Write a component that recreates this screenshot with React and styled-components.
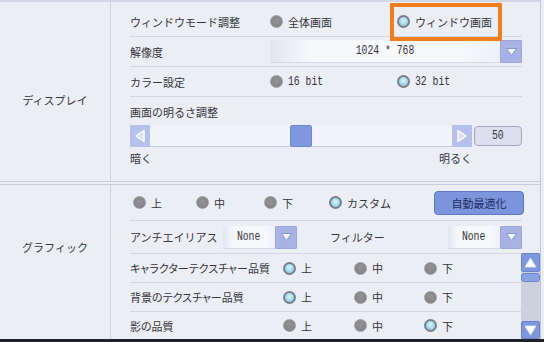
import React from "react";
import styled, { createGlobalStyle, css } from "styled-components";

const GlobalStyle = createGlobalStyle`
  html,
  body {
    margin: 0;
    padding: 0;
    background: #eceef6;
  }

  body {
    font-family: "Noto Sans CJK JP", "Noto Sans", sans-serif;
    font-size: 11px;
    color: #34353d;
  }
`;

const Screen = styled.div`
  width: 544px;
  height: 342px;
  overflow: hidden;
  display: flex;
  flex-direction: column;
  background: #eceef6;
`;

const Panel = styled.div`
  width: 540px;
  flex: 1;
  min-height: 0;
  display: flex;
  flex-direction: column;
  border-top: 2px solid #d3d6e3;
  border-right: 1px solid #c3c6d6;
`;

const BottomEdge = styled.div`
  height: 3px;
  background: #202124;
`;

const Section = styled.section`
  display: grid;
  grid-template-columns: 111px 1fr;
  border-bottom: 1px solid #c8cbda;

  ${(p) =>
    p.$continued &&
    css`
      flex: 1;
      min-height: 0;
      margin-top: 2px;
      border-top: 1px solid #c8cbda;
      border-bottom: 0;
    `}
`;

const SectionLabel = styled.div`
  border-right: 1px solid #d0d3e0;
  text-align: center;
  line-height: 16px;
  padding-top: ${(p) => p.$top}px;
`;

const Body = styled.div`
  min-width: 0;
  display: flex;
  flex-direction: column;
  padding: ${(p) => p.$top || 0}px 18px 0 19px;
`;

const Row = styled.div`
  height: ${(p) => p.$h || 29}px;
  display: flex;
  align-items: center;
  border-bottom: ${(p) => (p.$last ? "0" : "1px solid #d3d6e3")};
`;

const RowLabel = styled.span`
  width: ${(p) => (p.$w ? `${p.$w}px` : "auto")};
  flex: ${(p) => (p.$w ? "0 0 auto" : "1")};
  white-space: nowrap;
  line-height: 16px;
  font-feature-settings: ${(p) => (p.$narrow ? '"palt"' : "normal")};
`;

const Option = styled.span`
  position: relative;
  display: flex;
  align-items: center;
  gap: 5px;
  flex: 0 0 auto;
  width: ${(p) => (p.$w ? `${p.$w}px` : "auto")};
  margin-left: ${(p) => p.$ml || 0}px;
  line-height: 16px;
  white-space: nowrap;
`;

const Radio = styled.span`
  width: 13px;
  height: 13px;
  flex: 0 0 auto;
  box-sizing: border-box;
  border-radius: 50%;
  ${(p) =>
    p.$on
      ? css`
          border: 2px solid #7a8089;
          background: radial-gradient(
            circle at 50% 40%,
            #d6f3fb 0,
            #a4d8ea 55%,
            #86b8cc 100%
          );
        `
      : css`
          border: 1px solid #9c9c9f;
          background: radial-gradient(circle at 50% 40%, #949496, #7f7f82);
        `}
`;

const Mono = styled.span`
  display: inline-block;
  font-family: "Liberation Mono", "DejaVu Sans Mono", monospace;
  font-size: 13px;
  line-height: 16px;
  transform: scaleX(0.75);
  transform-origin: ${(p) => (p.$left ? "left center" : "center")};
  margin-right: ${(p) => (p.$left ? "-25%" : "0")};
  color: #33343c;
`;

const Highlight = styled.span`
  position: absolute;
  inset: -11px -10px -11px -7px;
  border: 4px solid #f17d1d;
  pointer-events: none;
`;

const Select = styled.div`
  display: flex;
  height: 23px;
  width: ${(p) => (p.$w ? `${p.$w}px` : "auto")};
  flex: ${(p) => (p.$w ? "0 0 auto" : "1")};
`;

const SelectValue = styled.div`
  flex: 1;
  display: flex;
  align-items: center;
  justify-content: center;
  box-sizing: border-box;
  border-bottom: 1px solid #d6d9e6;
  background: linear-gradient(
    to right,
    #e3e5ef,
    #f7f8fc 18%,
    #f7f8fc 82%,
    #eef0f7
  );
`;

const ArrowBox = styled.div`
  width: 22px;
  box-sizing: border-box;
  display: flex;
  align-items: center;
  justify-content: center;
  background: #a8b3e3;
  border: 1px solid #9ba7dc;
  border-radius: 1px;
`;

const BrightBlock = styled.div`
  padding-top: 7px;
  height: 77px;
`;

const SliderRow = styled.div`
  display: flex;
  align-items: center;
  height: 22px;
  margin-top: 5px;
`;

const StepButton = styled.div`
  width: 20px;
  height: 22px;
  flex: 0 0 auto;
  display: flex;
  align-items: center;
  justify-content: center;
  background: #b5c0ec;
`;

const Track = styled.div`
  position: relative;
  flex: 1;
  height: 22px;
  box-sizing: border-box;
  background: #f2f3fa;
  border-bottom: 1px solid #c7cadd;
`;

const Thumb = styled.div`
  position: absolute;
  top: 0;
  width: 22px;
  height: 22px;
  box-sizing: border-box;
  background: #7f97de;
  border: 1px solid #6f87d0;
  border-radius: 2px;
`;

const ValueBox = styled.div`
  width: 48px;
  height: 20px;
  margin-left: 2px;
  box-sizing: border-box;
  display: flex;
  align-items: center;
  justify-content: center;
  background: #dcdfee;
  border: 1px solid #a2a6bb;
  border-radius: 4px;
`;

const SliderLabels = styled.div`
  display: flex;
  justify-content: space-between;
  margin: 3px 50px 0 0;
  line-height: 16px;
`;

const ActionButton = styled.button`
  margin: 0 -2px 0 auto;
  width: 90px;
  height: 24px;
  padding: 0;
  font: inherit;
  color: #1e2a63;
  background: #7c94dc;
  border: 1px solid #5f76c4;
  border-radius: 4px;
`;

const Gap = styled.span`
  width: 33px;
  flex: 0 0 auto;
`;

const List = styled.div`
  flex: 1;
  min-height: 0;
  display: grid;
  grid-template-columns: 1fr 19px;
  margin-right: -18px;
`;

const ListRows = styled.div`
  display: flex;
  flex-direction: column;
`;

const ListRow = styled.div`
  height: ${(p) => p.$h || 28}px;
  display: flex;
  align-items: center;
  border-top: 1px solid #d3d6e3;
`;

const ScrollBar = styled.div`
  display: flex;
  flex-direction: column;
  background: #cdd0dd;
`;

const ScrollButton = styled.div`
  height: ${(p) => p.$h}px;
  box-sizing: border-box;
  display: flex;
  align-items: center;
  justify-content: center;
  background: #7f97de;
  border: 1px solid #6a82cc;
  border-radius: 2px;
`;

const ScrollThumb = styled.div`
  height: 9px;
  margin-top: 1px;
  box-sizing: border-box;
  background: #8aa1e2;
  border: 1px solid #6c84cf;
  border-radius: 3px;
`;

const ScrollSpace = styled.div`
  flex: 1;
`;

const DownArrow = () => (
  <svg width="13" height="10" viewBox="0 0 13 10">
    <path
      d="M1.5 1.5 H11.5 L6.5 8.5 Z"
      fill="#f4f6fd"
      stroke="#8794d2"
      strokeWidth="1"
      strokeLinejoin="round"
    />
  </svg>
);

const StepArrow = ({ dir }) => (
  <svg width="12" height="14" viewBox="0 0 12 14">
    <path
      d={dir === "left" ? "M10 1.5 V12.5 L2 7 Z" : "M2 1.5 V12.5 L10 7 Z"}
      fill="#d7def7"
      stroke="#ffffff"
      strokeWidth="1.4"
      strokeLinejoin="round"
    />
  </svg>
);

const ScrollArrow = ({ up }) => (
  <svg width="13" height="11" viewBox="0 0 13 11">
    <path
      d={up ? "M6.5 1 L12 10 H1 Z" : "M1 1 H12 L6.5 10 Z"}
      fill="#ffffff"
      stroke="#dfe6fb"
      strokeWidth="0.8"
      strokeLinejoin="round"
    />
  </svg>
);

const Dropdown = ({ value, width }) => (
  <Select $w={width}>
    <SelectValue>
      <Mono>{value}</Mono>
    </SelectValue>
    <ArrowBox>
      <DownArrow />
    </ArrowBox>
  </Select>
);

const RadioOption = ({ on, children, mono, width, ml, highlight }) => (
  <Option $w={width} $ml={ml}>
    <Radio $on={on} />
    {mono ? <Mono $left>{children}</Mono> : children}
    {highlight && <Highlight />}
  </Option>
);

const qualityRows = [
  { label: "キャラクターテクスチャー品質", value: 0 },
  { label: "背景のテクスチャー品質", value: 0 },
  { label: "影の品質", value: 2 },
];

const levels = ["上", "中", "下"];
const levelWidths = [71, 70];

const brightness = 50;

export default function App() {
  return (
    <Screen>
      <GlobalStyle />
      <Panel>
        <Section>
          <SectionLabel $top={90}>ディスプレイ</SectionLabel>
          <Body $top={5}>
            <Row>
              <RowLabel $w={140}>ウィンドウモード調整</RowLabel>
              <RadioOption width={127}>全体画面</RadioOption>
              <RadioOption on width={95} highlight>
                ウィンドウ画面
              </RadioOption>
            </Row>
            <Row>
              <RowLabel $w={140}>解像度</RowLabel>
              <Dropdown value="1024 * 768" />
            </Row>
            <Row>
              <RowLabel $w={140}>カラー設定</RowLabel>
              <RadioOption mono width={127}>
                16 bit
              </RadioOption>
              <RadioOption on mono>
                32 bit
              </RadioOption>
            </Row>
            <BrightBlock>
              <RowLabel>画面の明るさ調整</RowLabel>
              <SliderRow>
                <StepButton>
                  <StepArrow dir="left" />
                </StepButton>
                <Track>
                  <Thumb style={{ left: `calc((100% - 22px) * ${brightness / 100})` }} />
                </Track>
                <StepButton>
                  <StepArrow dir="right" />
                </StepButton>
                <ValueBox>
                  <Mono>{brightness}</Mono>
                </ValueBox>
              </SliderRow>
              <SliderLabels>
                <span>暗く</span>
                <span>明るく</span>
              </SliderLabels>
            </BrightBlock>
          </Body>
        </Section>

        <Section $continued>
          <SectionLabel $top={54}>グラフィック</SectionLabel>
          <Body>
            <Row $h={35}>
              <RadioOption ml={3} width={63}>
                上
              </RadioOption>
              <RadioOption width={68}>中</RadioOption>
              <RadioOption width={65}>下</RadioOption>
              <RadioOption on>カスタム</RadioOption>
              <ActionButton>自動最適化</ActionButton>
            </Row>
            <Row $h={32} $last>
              <RowLabel $w={93}>アンチエイリアス</RowLabel>
              <Dropdown value="None" width={74} />
              <Gap />
              <RowLabel>フィルター</RowLabel>
              <Dropdown value="None" width={74} />
            </Row>
            <List>
              <ListRows>
                {qualityRows.map((row, i) => (
                  <ListRow key={row.label} $h={i === 2 ? 27 : 28}>
                    <RowLabel $w={153} $narrow>
                      {row.label}
                    </RowLabel>
                    {levels.map((lv, j) => (
                      <RadioOption key={lv} on={row.value === j} width={levelWidths[j]}>
                        {lv}
                      </RadioOption>
                    ))}
                  </ListRow>
                ))}
              </ListRows>
              <ScrollBar>
                <ScrollButton $h={19}>
                  <ScrollArrow up />
                </ScrollButton>
                <ScrollThumb />
                <ScrollSpace />
                <ScrollButton $h={18}>
                  <ScrollArrow />
                </ScrollButton>
              </ScrollBar>
            </List>
          </Body>
        </Section>
      </Panel>
      <BottomEdge />
    </Screen>
  );
}
